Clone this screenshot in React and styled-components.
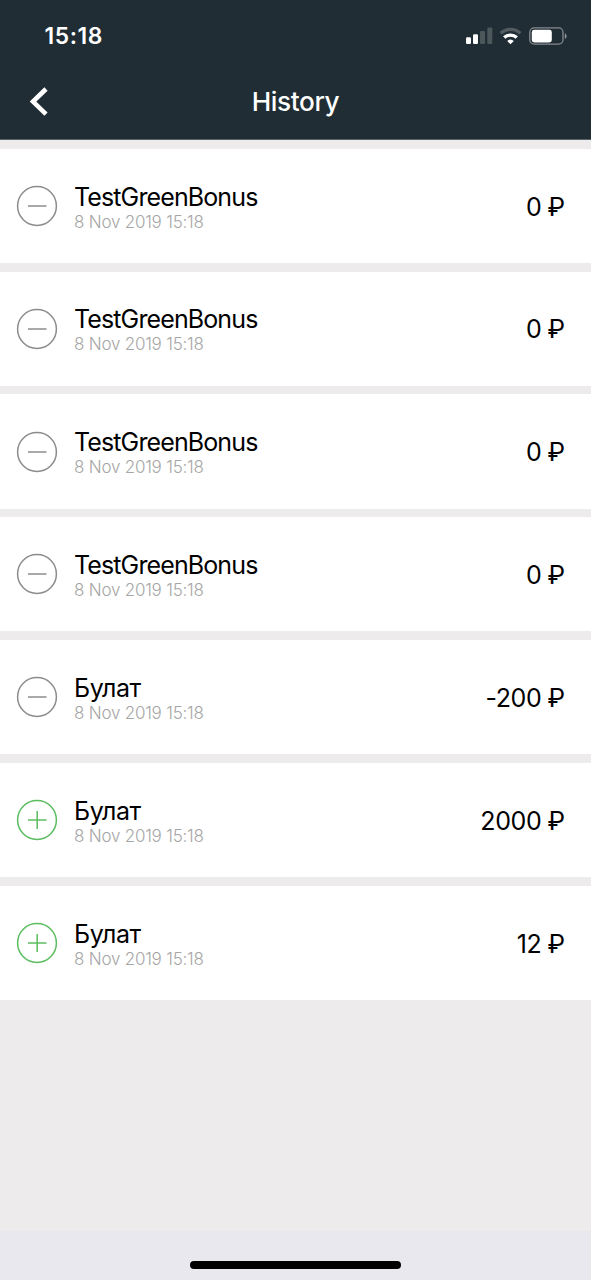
import React from "react";
import styled, { createGlobalStyle } from "styled-components";

const operations = [
  { id: 1, name: "TestGreenBonus", date: "8 Nov 2019 15:18", amount: "0" },
  { id: 2, name: "TestGreenBonus", date: "8 Nov 2019 15:18", amount: "0" },
  { id: 3, name: "TestGreenBonus", date: "8 Nov 2019 15:18", amount: "0" },
  { id: 4, name: "TestGreenBonus", date: "8 Nov 2019 15:18", amount: "0" },
  { id: 5, name: "Булат", date: "8 Nov 2019 15:18", amount: "-200" },
  { id: 6, name: "Булат", date: "8 Nov 2019 15:18", amount: "2000", income: true },
  { id: 7, name: "Булат", date: "8 Nov 2019 15:18", amount: "12", income: true },
];

const isCyrillic = (text) => /[а-я]/i.test(text);

function StatusIcons() {
  return (
    <StatusSvg width="104" height="20" viewBox="0 0 104 20">
      <g fill="#fff">
        <rect x="1" y="11.2" width="5" height="6.8" rx="1.2" />
        <rect x="8" y="8.2" width="5" height="9.8" rx="1.2" />
        <rect x="15" y="5" width="5" height="13" rx="1.2" opacity="0.2" />
        <rect x="22.3" y="1.4" width="5" height="16.6" rx="1.2" opacity="0.2" />
      </g>
      <g fill="none" stroke="#fff" strokeWidth="3.4">
        <path d="M35.6 7.2a14.6 14.6 0 0 1 19.8 0" opacity="0.22" />
        <path d="M39.2 11.6a9.2 9.2 0 0 1 12.6 0" />
      </g>
      <path d="M45.5 18.2l-3.3-3.2a4.9 4.9 0 0 1 6.6 0z" fill="#fff" />
      <rect
        x="64.8"
        y="1.8"
        width="33.2"
        height="16.4"
        rx="4.4"
        fill="none"
        stroke="#fff"
        strokeWidth="1.3"
        opacity="0.45"
      />
      <rect x="66.8" y="3.8" width="20" height="12.6" rx="2.4" fill="#fff" />
      <path d="M99.8 7.2c2.4.9 2.4 4.7 0 5.6z" fill="#fff" opacity="0.5" />
    </StatusSvg>
  );
}

function OperationIcon({ income }) {
  return (
    <IconSvg $income={income} width="42" height="42" viewBox="0 0 42 42">
      <circle cx="21" cy="21" r="19.4" />
      <path d={income ? "M12 21h18.5M21.2 12v18" : "M12 21h18.5"} />
    </IconSvg>
  );
}

export default function App() {
  return (
    <>
      <GlobalStyle />
      <Screen>
        <Header>
          <StatusBar>
            <Time>15:18</Time>
            <StatusIcons />
          </StatusBar>
          <NavBar>
            <BackButton aria-label="Back">
              <svg width="20" height="30" viewBox="0 0 20 30">
                <path
                  d="M17 2L4 14.6l13 12.6"
                  fill="none"
                  stroke="#fff"
                  strokeWidth="4.6"
                />
              </svg>
            </BackButton>
            <Title>History</Title>
          </NavBar>
        </Header>
        <List>
          {operations.map((item) => (
            <Row key={item.id}>
              <OperationIcon income={item.income} />
              <Info>
                <Name $cyrillic={isCyrillic(item.name)}>{item.name}</Name>
                <Date>{item.date}</Date>
              </Info>
              <Amount>
                {item.amount} <Currency>₽</Currency>
              </Amount>
            </Row>
          ))}
        </List>
        <Footer>
          <HomeIndicator />
        </Footer>
      </Screen>
    </>
  );
}

const GlobalStyle = createGlobalStyle`
  * {
    box-sizing: border-box;
  }
  body {
    margin: 0;
    font-family: Inter, "Liberation Sans", sans-serif;
    background-color: #edebec;
  }
`;

const Screen = styled.div`
  display: flex;
  flex-direction: column;
  width: 591px;
  height: 1280px;
  overflow: hidden;
  background-color: #edebec;
`;

const Header = styled.header`
  height: 139.5px;
  flex-shrink: 0;
  border-bottom: 1px solid #58636a;
  background-color: #202d34;
  color: #fff;
`;

const StatusBar = styled.div`
  display: flex;
  justify-content: space-between;
  align-items: center;
  height: 72px;
  padding: 0 22px 0 44.5px;
`;

const StatusSvg = styled.svg`
  display: block;
`;

const Time = styled.span`
  padding-bottom: 2px;
  font-size: 22.8px;
  font-weight: 600;
  letter-spacing: 0.6px;
`;

const NavBar = styled.div`
  display: grid;
  grid-template-columns: 78px 1fr 78px;
  align-items: center;
  height: 60px;
`;

const BackButton = styled.button`
  display: flex;
  padding: 0 0 0 29px;
  border: none;
  background: none;
  cursor: pointer;
`;

const Title = styled.h1`
  margin: 0;
  padding-bottom: 2px;
  text-align: center;
  font-size: 26.2px;
  font-weight: 500;
  letter-spacing: -0.4px;
`;

const List = styled.main`
  display: flex;
  flex-direction: column;
  gap: 8.6px;
  flex: 1;
  padding-top: 9.2px;
`;

const Row = styled.div`
  display: flex;
  align-items: center;
  height: 114.25px;
  flex-shrink: 0;
  padding: 0 26.5px 0 16px;
  background-color: #fff;
`;

const IconSvg = styled.svg`
  flex-shrink: 0;
  fill: none;
  stroke: ${({ $income }) => ($income ? "#5bbd60" : "#8c8c8c")};
  stroke-width: 1.5;
`;

const Info = styled.div`
  flex: 1;
  padding: 3.6px 0 0 16px;
`;

const Name = styled.div`
  font-size: 25px;
  line-height: 28px;
  letter-spacing: ${({ $cyrillic }) => ($cyrillic ? "-0.5px" : "-0.88px")};
  color: #000;
`;

const Date = styled.div`
  font-size: 17px;
  line-height: 22px;
  font-weight: 300;
  letter-spacing: -0.23px;
  color: #a6a6a6;
`;

const Amount = styled.div`
  padding-top: 1.6px;
  font-size: 25px;
  letter-spacing: -0.4px;
  color: #000;
`;

const Currency = styled.span`
  font-family: Roboto, sans-serif;
  letter-spacing: 0;
`;

const Footer = styled.footer`
  display: flex;
  justify-content: center;
  align-items: flex-end;
  height: 49px;
  flex-shrink: 0;
  padding-bottom: 11px;
  background-color: #e9e8ee;
`;

const HomeIndicator = styled.div`
  width: 211px;
  height: 8px;
  border-radius: 4px;
  background-color: #000;
`;
